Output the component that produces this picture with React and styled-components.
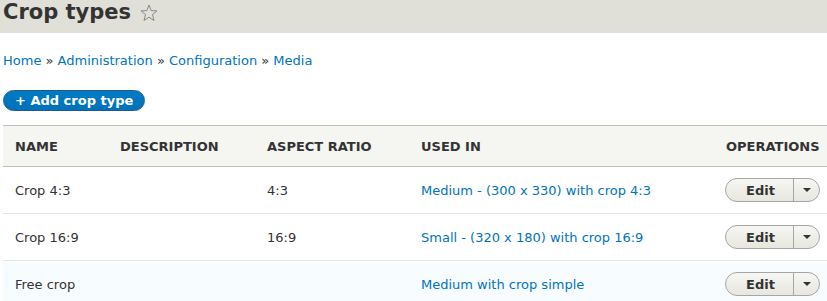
import React from "react";
import styled, { createGlobalStyle } from "styled-components";

const Global = createGlobalStyle`
  html, body { margin: 0; padding: 0; overflow: hidden; background: #fff; }
  body { font-family: "DejaVu Sans", Verdana, sans-serif; font-size: 13px; color: #333; }
`;

const Page = styled.div`
  width: 827px;
  overflow: hidden;
`;

const Header = styled.header`
  background: #e0e0d8;
  height: 33px;
  padding-left: 3px;
  display: flex;
  align-items: flex-start;
  gap: 9px;
`;

const Title = styled.h1`
  margin: 0;
  font-size: 21px;
  line-height: 25px;
  font-weight: bold;
  color: #333;
`;

const StarWrap = styled.span`
  display: flex;
  margin-top: 4px;
`;

const Content = styled.main`
  padding: 0 0 0 3px;
`;

const Breadcrumb = styled.nav`
  margin-top: 20px;
  line-height: 16px;
  color: #333;
  white-space: pre;
`;

const Link = styled.a`
  color: #0074bd;
  text-decoration: none;
`;

const AddButton = styled.button`
  margin-top: 21px;
  height: 21px;
  padding: 0 11px 0 11px;
  border-radius: 20px;
  border: 1px solid #1e5c90;
  background: linear-gradient(to bottom, #007bc6, #0071b8);
  color: #fff;
  font-family: "DejaVu Sans", Verdana, sans-serif;
  font-size: 13px;
  font-weight: bold;
  line-height: 19px;
  display: block;
`;

const Table = styled.table`
  margin-top: 14px;
  width: 828px;
  border-collapse: collapse;
  table-layout: fixed;
`;

const Th = styled.th`
  text-align: left;
  text-transform: uppercase;
  font-weight: bold;
  font-size: 13px;
  color: #333;
  background: #f5f5f2;
  border-top: 1px solid #bfbfba;
  border-bottom: 1px solid #bfbfba;
  height: 40px;
  padding: 0 12px;
  box-sizing: content-box;
`;

const Row = styled.tr`
  background: ${(p) => (p.$tint ? "#f7fcff" : "#fff")};
  border-bottom: 1px solid #e6e4df;
`;

const Td = styled.td`
  height: 46px;
  padding: 0 ${(p) => (p.$ops ? "11px" : "12px")};
  color: #333;
  white-space: nowrap;
`;

const DropButton = styled.div`
  display: inline-flex;
  height: 24px;
  box-sizing: border-box;
  border: 1px solid #a6a6a6;
  border-radius: 12px;
  background: linear-gradient(to bottom, #f6f6f3, #e7e7df);
  overflow: hidden;
  vertical-align: middle;
`;

const DropMain = styled.span`
  width: 67px;
  display: flex;
  align-items: center;
  justify-content: center;
  font-weight: bold;
  color: #333;
  padding-left: 2px;
  box-sizing: border-box;
`;

const DropToggle = styled.span`
  width: 25px;
  border-left: 1px solid #a6a6a6;
  display: flex;
  align-items: center;
  justify-content: center;
`;

const Arrow = styled.span`
  width: 0;
  height: 0;
  border-left: 4px solid transparent;
  border-right: 4px solid transparent;
  border-top: 4px solid #333;
  margin-left: 1px;
`;

const Star = () => (
  <svg width="18" height="18" viewBox="0 0 18 18">
    <polygon
      points="9,1 11.2,6.6 17,6.9 12.5,10.6 14,16.5 9,13.2 4,16.5 5.5,10.6 1,6.9 6.8,6.6"
      fill="none"
      stroke="#8a8a82"
      strokeWidth="1"
      strokeLinejoin="round"
    />
  </svg>
);

const rows = [
  { name: "Crop 4:3", ratio: "4:3", used: "Medium - (300 x 330) with crop 4:3" },
  { name: "Crop 16:9", ratio: "16:9", used: "Small - (320 x 180) with crop 16:9" },
  { name: "Free crop", ratio: "", used: "Medium with crop simple", tint: true },
];

export default function App() {
  return (
    <Page>
      <Global />
      <Header>
        <Title>Crop types</Title>
        <StarWrap>
          <Star />
        </StarWrap>
      </Header>
      <Content>
        <Breadcrumb>
          <Link href="#">Home</Link>
          {" » "}
          <Link href="#">Administration</Link>
          {" » "}
          <Link href="#">Configuration</Link>
          {" » "}
          <Link href="#">Media</Link>
        </Breadcrumb>
        <AddButton>+ Add crop type</AddButton>
        <Table>
          <colgroup>
            <col style={{ width: 105 }} />
            <col style={{ width: 147 }} />
            <col style={{ width: 154 }} />
            <col style={{ width: 305 }} />
            <col style={{ width: 117 }} />
          </colgroup>
          <thead>
            <tr>
              <Th>Name</Th>
              <Th>Description</Th>
              <Th>Aspect ratio</Th>
              <Th>Used in</Th>
              <Th>Operations</Th>
            </tr>
          </thead>
          <tbody>
            {rows.map((r) => (
              <Row key={r.name} $tint={r.tint}>
                <Td>{r.name}</Td>
                <Td></Td>
                <Td>{r.ratio}</Td>
                <Td>
                  <Link href="#">{r.used}</Link>
                </Td>
                <Td $ops>
                  <DropButton>
                    <DropMain>Edit</DropMain>
                    <DropToggle>
                      <Arrow />
                    </DropToggle>
                  </DropButton>
                </Td>
              </Row>
            ))}
          </tbody>
        </Table>
      </Content>
    </Page>
  );
}
